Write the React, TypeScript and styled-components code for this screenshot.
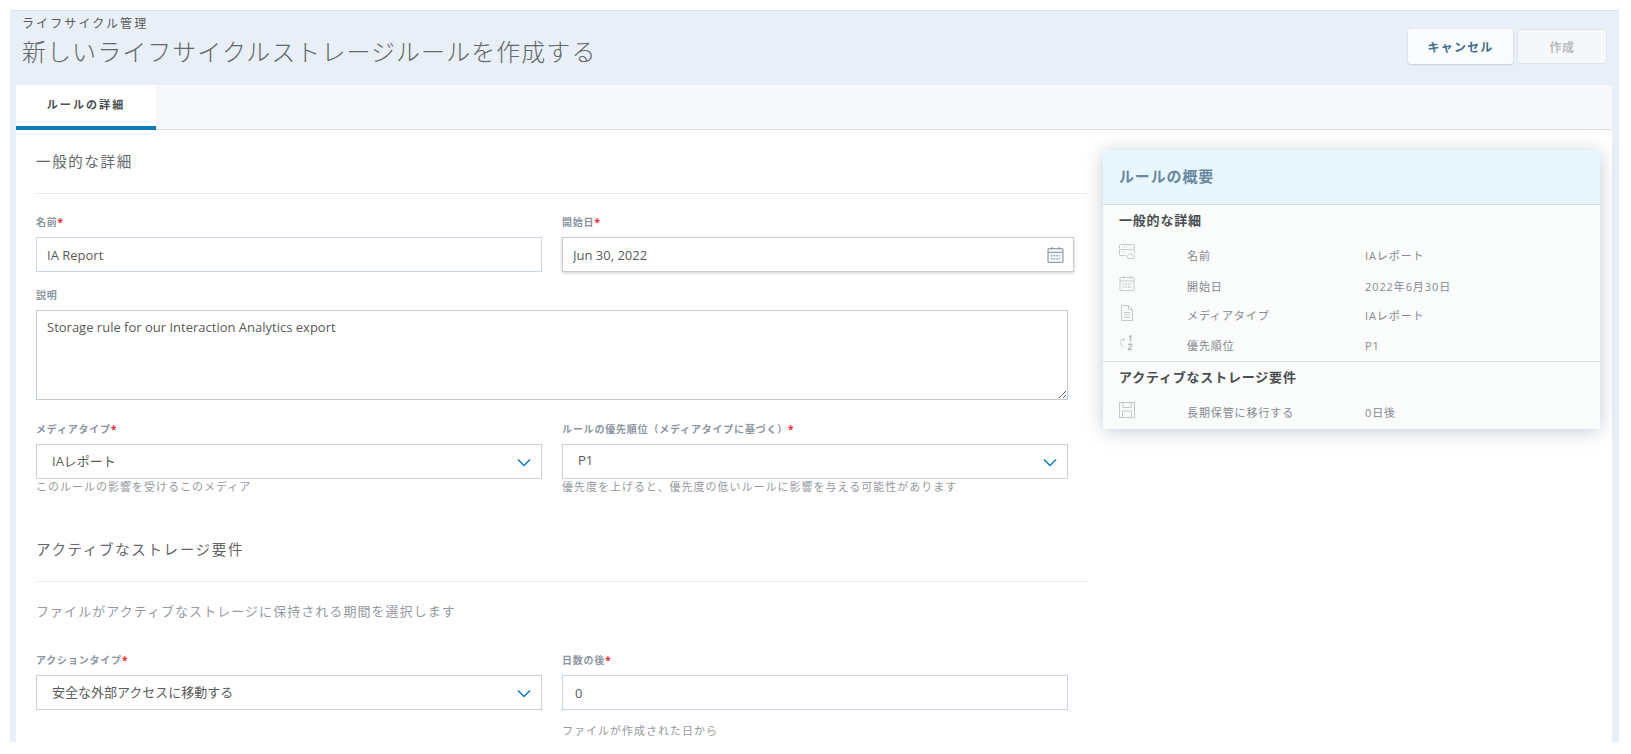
import React from 'react';
import styled, {createGlobalStyle} from 'styled-components';

const GlobalStyle = createGlobalStyle`
  html, body {
    margin: 0;
    height: 100%;
    background: #fff;
    overflow: hidden;
  }
  body {
    font-family: "Open Sans", "Noto Sans CJK JP", sans-serif;
    color: #4a4a4a;
  }
`;

const font = `"Open Sans", "Noto Sans CJK JP", sans-serif`;

const Page = styled.div`
  box-sizing: border-box;
  height: 732px;
  margin: 10px 12px 12px 10px;
  padding: 0 7px 0 6px;
  display: flex;
  flex-direction: column;
  overflow: hidden;
  background: #e8eff6;
  border-top: 1px solid #dfe6ee;
`;

const Header = styled.header`
  flex: none;
  height: 74px;
  display: flex;
  justify-content: space-between;
`;

const Breadcrumb = styled.div`
  margin: 4px 0 0 6px;
  font-size: 12px;
  line-height: 18px;
  letter-spacing: 2.1px;
  color: #5a5a5a;
`;

const Title = styled.h1`
  margin: 2px 0 0 6px;
  font-size: 24px;
  line-height: 34px;
  font-weight: 300;
  letter-spacing: 1.05px;
  color: #63686c;
`;

const Actions = styled.div`
  display: flex;
  gap: 4px;
  margin: 18px 5px 0 0;
  height: 35px;
`;

const Button = styled.button<{$disabled?: boolean}>`
  box-sizing: border-box;
  width: ${props => (props.$disabled ? '90px' : '105px')};
  height: 35px;
  border: ${props => (props.$disabled ? '1px solid #dfe5ea' : 'none')};
  border-radius: 3px;
  font-family: ${font};
  font-size: 12px;
  font-weight: 700;
  letter-spacing: ${props => (props.$disabled ? '0.5px' : '1.2px')};
  color: ${props => (props.$disabled ? '#b9bdc1' : '#446f90')};
  background: ${props => (props.$disabled ? '#f6f7f8' : '#f9fbfd')};
  box-shadow: ${props => (props.$disabled ? 'none' : '0 1px 2px rgba(90, 110, 130, 0.25)')};
`;

const Card = styled.main`
  flex: 1;
  display: flex;
  flex-direction: column;
  min-height: 0;
  background: #fff;
`;

const TabBar = styled.div`
  flex: none;
  height: 44px;
  display: flex;
  background: #f7f8fa;
  border-bottom: 1px solid #d9e0e6;
`;

const Tab = styled.div`
  box-sizing: border-box;
  width: 140px;
  height: 45px;
  display: flex;
  align-items: center;
  justify-content: center;
  padding-bottom: 4px;
  background: #fff;
  border-bottom: 4px solid #0a7bc1;
  font-size: 11px;
  font-weight: 700;
  letter-spacing: 2.1px;
  color: #4a4e51;
`;

const Body = styled.div`
  flex: 1;
  display: flex;
  min-height: 0;
  gap: 15px;
  padding-left: 20px;
`;

const Form = styled.div`
  flex: none;
  width: 1052px;
`;

const SectionHeading = styled.h2<{$top: number}>`
  margin: ${props => props.$top}px 0 0;
  padding-bottom: 20px;
  height: 23px;
  border-bottom: 1px solid #e9ebed;
  font-size: 14.5px;
  line-height: 23px;
  font-weight: 400;
  letter-spacing: 1.65px;
  color: #63676a;
`;

const Row = styled.div<{$top: number}>`
  display: grid;
  grid-template-columns: 506px 506px;
  column-gap: 20px;
  margin-top: ${props => props.$top}px;
`;

const Field = styled.div<{$wide?: boolean}>`
  min-width: 0;
  grid-column: ${props => (props.$wide ? '1 / span 2' : 'auto')};
`;

const Label = styled.label`
  display: block;
  height: 15px;
  margin-bottom: 7px;
  font-size: 10px;
  line-height: 15px;
  font-weight: 700;
  letter-spacing: 0.8px;
  color: #8b95a2;
`;

const Required = styled.span`
  color: #ef2b2b;
`;

const TextInput = styled.input<{$raised?: boolean; $inset?: number}>`
  display: block;
  box-sizing: border-box;
  width: 100%;
  height: 35px;
  padding: 0 ${props => props.$inset ?? 10}px;
  border: 1px solid ${props => (props.$raised ? '#c8cdd2' : '#c9d5e0')};
  border-radius: 0;
  outline: none;
  font-family: ${font};
  font-size: 13px;
  color: #5a5a5a;
  background: #fff;
  box-shadow: ${props => (props.$raised ? '0 1px 3px rgba(80, 90, 100, 0.3)' : 'none')};
`;

const DateField = styled.div`
  position: relative;
  width: 512px;
`;

const DateIcon = styled.svg`
  position: absolute;
  right: 10px;
  top: 9px;
  width: 17px;
  height: 17px;
`;

const TextArea = styled.textarea`
  display: block;
  box-sizing: border-box;
  width: 1032px;
  height: 90px;
  padding: 7px 10px;
  border: 1px solid #c3cdd6;
  border-radius: 0;
  outline: none;
  font-family: ${font};
  font-size: 13px;
  line-height: 18px;
  color: #5a5a5a;
`;

const SelectBox = styled.div`
  box-sizing: border-box;
  height: 35px;
  padding: 0 10px 3px 15px;
  display: flex;
  align-items: center;
  justify-content: space-between;
  border: 1px solid #cdd0d3;
  font-size: 13px;
  letter-spacing: 0;
  color: #5a5a5a;
`;

const Chevron = styled.svg`
  width: 14px;
  height: 9px;
  margin-top: 5px;
`;

const Help = styled.div<{$top?: number}>`
  margin-top: ${props => props.$top ?? 0}px;
  font-size: 11px;
  line-height: 16px;
  letter-spacing: 1px;
  color: #95999d;
`;

const Intro = styled.p`
  margin: 18px 0 0;
  font-size: 13px;
  line-height: 22px;
  letter-spacing: 1.05px;
  color: #969a9f;
`;

const Summary = styled.aside`
  flex: none;
  align-self: flex-start;
  width: 497px;
  height: 279px;
  margin-top: 20px;
  background: #fafbfb;
  box-shadow: 0 2px 18px rgba(110, 130, 150, 0.4);
`;

const SummaryHeader = styled.div`
  box-sizing: border-box;
  height: 55px;
  padding: 0 0 4px 16px;
  display: flex;
  align-items: center;
  background: #e8f7fd;
  border-bottom: 1px solid #cfdde8;
  font-size: 15px;
  font-weight: 700;
  letter-spacing: 0.85px;
  color: #6a87a0;
`;

const SummaryTitle = styled.div`
  height: 33px;
  padding-left: 16px;
  font-size: 13px;
  line-height: 31px;
  font-weight: 700;
  letter-spacing: 0.8px;
  color: #4a4e51;
`;

const SummaryRow = styled.div<{$height: number}>`
  display: grid;
  grid-template-columns: 68px 178px 1fr;
  align-items: center;
  height: ${props => props.$height}px;
  padding-left: 16px;
  font-size: 11px;
  letter-spacing: 0.9px;
  color: #85898d;
`;

const SummaryIcon = styled.svg`
  width: 16px;
  height: 16px;
  margin-top: -5px;
`;

const SummaryDivider = styled.div`
  height: 1px;
  margin-top: 1px;
  background: #dcdfe6;
`;

const NameIcon = () => (
  <SummaryIcon viewBox="0 0 16 16" fill="none" stroke="#c6c9cc" strokeWidth="1">
    <rect x="0.5" y="0.5" width="15" height="5" rx="1"/>
    <path d="M0.5 5.5v5a1 1 0 0 0 1 1h5M15.5 5.5v3"/>
    <path d="M3 3h5M3 8h4" strokeDasharray="1 1"/>
    <path d="M9 14.5a1.7 1.7 0 0 1 .3-3.3 2.6 2.6 0 0 1 4.9.5 1.5 1.5 0 0 1 .3 2.8z"/>
  </SummaryIcon>
);

const CalendarPaths = () => (
  <>
    <rect x="1" y="2.5" width="14" height="13" rx="1"/>
    <path d="M1 6h14M4.5 1v2.5M11.5 1v2.5"/>
    <path d="M3.5 9h9M3.5 12h9" strokeWidth="1.6" strokeDasharray="1.6 1.1"/>
  </>
);

const DocIcon = () => (
  <SummaryIcon viewBox="0 0 16 16" fill="none" stroke="#c6c9cc" strokeWidth="1">
    <path d="M2.5 0.5h7l4 4v11h-11zM9.5 0.5v4h4"/>
    <path d="M5 7.5h6M5 10h6M5 12.5h6"/>
  </SummaryIcon>
);

const PriorityIcon = () => (
  <SummaryIcon viewBox="0 0 16 16" fill="none" stroke="#c6c9cc" strokeWidth="1">
    <path d="M1 6.2c.6-1.6 2.2-2 4.5-1.6M4 3.2l1.6 1.4L4 6M2 6.5c0 2.6.5 4.4 2 6"/>
    <path d="M10 2l1.6-1.2v5.4M9.5 10c.4-1.3 3.2-1.3 3.2.3 0 1.4-3.2 2.3-3.2 4.2h3.4" stroke="#b4b8bb" strokeWidth="1.4"/>
  </SummaryIcon>
);

const SaveIcon = () => (
  <SummaryIcon viewBox="0 0 16 16" fill="none" stroke="#c6c9cc" strokeWidth="1">
    <rect x="0.5" y="0.5" width="15" height="15"/>
    <path d="M4 0.5v5h8v-5M3.5 15.5v-6.5h9v6.5"/>
  </SummaryIcon>
);

const DownChevron = () => (
  <Chevron viewBox="0 0 14 9" fill="none" stroke="#0a7bc1" strokeWidth="1.5">
    <path d="M1 1.5l6 6 6-6"/>
  </Chevron>
);

export default function App() {
  return (
    <>
      <GlobalStyle/>
      <Page>
        <Header>
          <div>
            <Breadcrumb>ライフサイクル管理</Breadcrumb>
            <Title>新しいライフサイクルストレージルールを作成する</Title>
          </div>
          <Actions>
            <Button>キャンセル</Button>
            <Button $disabled>作成</Button>
          </Actions>
        </Header>
        <Card>
          <TabBar>
            <Tab>ルールの詳細</Tab>
          </TabBar>
          <Body>
            <Form>
              <SectionHeading $top={20}>一般的な詳細</SectionHeading>
              <Row $top={21}>
                <Field>
                  <Label>名前<Required>*</Required></Label>
                  <TextInput readOnly defaultValue="IA Report"/>
                </Field>
                <Field>
                  <Label>開始日<Required>*</Required></Label>
                  <DateField>
                    <TextInput $raised readOnly defaultValue="Jun 30, 2022"/>
                    <DateIcon viewBox="0 0 16 16" fill="none" stroke="#8fa1b0" strokeWidth="1.2">
                      <CalendarPaths/>
                    </DateIcon>
                  </DateField>
                </Field>
              </Row>
              <Row $top={16}>
                <Field $wide>
                  <Label>説明</Label>
                  <TextArea readOnly defaultValue="Storage rule for our Interaction Analytics export"/>
                </Field>
              </Row>
              <Row $top={22}>
                <Field>
                  <Label>メディアタイプ<Required>*</Required></Label>
                  <SelectBox>IAレポート<DownChevron/></SelectBox>
                  <Help>このルールの影響を受けるこのメディア</Help>
                </Field>
                <Field>
                  <Label>ルールの優先順位（メディアタイプに基づく）<Required>*</Required></Label>
                  <SelectBox>P1<DownChevron/></SelectBox>
                  <Help>優先度を上げると、優先度の低いルールに影響を与える可能性があります</Help>
                </Field>
              </Row>
              <SectionHeading $top={43}>アクティブなストレージ要件</SectionHeading>
              <Intro>ファイルがアクティブなストレージに保持される期間を選択します</Intro>
              <Row $top={31}>
                <Field>
                  <Label>アクションタイプ<Required>*</Required></Label>
                  <SelectBox>安全な外部アクセスに移動する<DownChevron/></SelectBox>
                </Field>
                <Field>
                  <Label>日数の後<Required>*</Required></Label>
                  <TextInput readOnly defaultValue="0" $inset={12}/>
                  <Help $top={13}>ファイルが作成された日から</Help>
                </Field>
              </Row>
            </Form>
            <Summary>
              <SummaryHeader>ルールの概要</SummaryHeader>
              <SummaryTitle>一般的な詳細</SummaryTitle>
              <SummaryRow $height={33}><NameIcon/><span>名前</span><span>IAレポート</span></SummaryRow>
              <SummaryRow $height={29}>
                <SummaryIcon viewBox="0 0 16 16" fill="none" stroke="#c6c9cc" strokeWidth="1">
                  <CalendarPaths/>
                </SummaryIcon>
                <span>開始日</span><span>2022年6月30日</span>
              </SummaryRow>
              <SummaryRow $height={30}><DocIcon/><span>メディアタイプ</span><span>IAレポート</span></SummaryRow>
              <SummaryRow $height={30}><PriorityIcon/><span>優先順位</span><span>P1</span></SummaryRow>
              <SummaryDivider/>
              <SummaryTitle>アクティブなストレージ要件</SummaryTitle>
              <SummaryRow $height={34}><SaveIcon/><span>長期保管に移行する</span><span>0日後</span></SummaryRow>
            </Summary>
          </Body>
        </Card>
      </Page>
    </>
  );
}
